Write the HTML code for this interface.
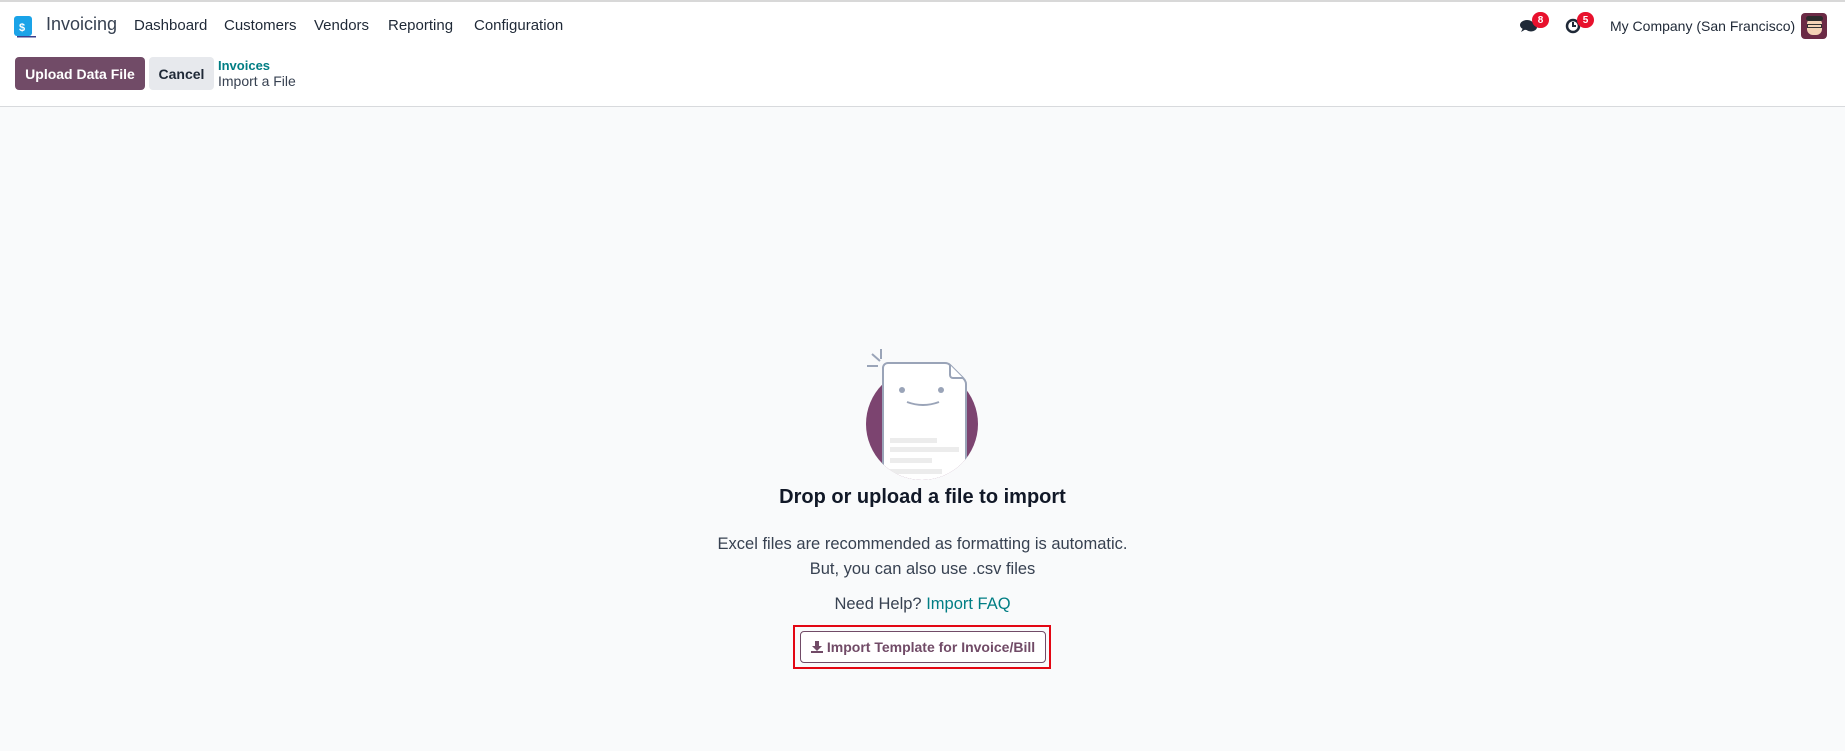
<!DOCTYPE html>
<html><head><style>
*{margin:0;padding:0;box-sizing:border-box}
body{width:1845px;height:751px;background:#f9fafb;font-family:"Liberation Sans",sans-serif;color:#374151;position:relative;overflow:hidden}
.hdr{position:absolute;left:0;top:0;width:1845px;height:107px;background:#fff;border-top:2px solid #d8d8d8;border-bottom:1px solid #d8dadd}
.a{position:absolute;white-space:nowrap}
.nav{font-size:15px;color:#1f2937;top:15px}
.btn{position:absolute;top:55px;height:33px;border-radius:4px;font-size:14px;font-weight:bold;display:flex;align-items:center;justify-content:center;white-space:nowrap}
.badge{position:absolute;width:17px;height:16px;border-radius:8px;background:#e8112d;color:#fff;font-size:10px;font-weight:bold;display:flex;align-items:center;justify-content:center}
.c{position:absolute;left:0;width:1845px;text-align:center}
</style></head><body>
<div class="hdr">
 <svg class="a" style="left:14px;top:13px" width="22" height="23" viewBox="0 0 22 23"><rect x="0" y="1" width="18" height="20" rx="3" fill="#1aa3e8"/><path d="M3 21h19v1.5H3z" fill="#3b3f8c"/><text x="5" y="16" font-size="11" font-weight="bold" fill="#fff" font-family="Liberation Sans">$</text></svg>
 <div class="a nav" style="left:46px;top:12px;font-size:18px;color:#374151">Invoicing</div>
 <div class="a nav" style="left:134px">Dashboard</div>
 <div class="a nav" style="left:224px">Customers</div>
 <div class="a nav" style="left:314px">Vendors</div>
 <div class="a nav" style="left:388px">Reporting</div>
 <div class="a nav" style="left:474px">Configuration</div>
 <svg class="a" style="left:1520px;top:16px" width="18" height="16" viewBox="0 0 18 16"><ellipse cx="7" cy="7" rx="7" ry="5" fill="#1f2937"/><ellipse cx="11" cy="9" rx="6" ry="4.5" fill="#1f2937"/><path d="M3 10l-2 4 5-3z" fill="#1f2937"/></svg>
 <div class="badge" style="left:1532px;top:10px">8</div>
 <svg class="a" style="left:1565px;top:16px" width="16" height="16" viewBox="0 0 16 16"><circle cx="8" cy="8" r="6" fill="none" stroke="#1f2937" stroke-width="2.5"/><path d="M8 4v4h3" stroke="#1f2937" stroke-width="2" fill="none"/></svg>
 <div class="badge" style="left:1577px;top:10px">5</div>
 <div class="a nav" style="left:1610px;top:16px;font-size:14px">My Company (San Francisco)</div>
 <div class="a" style="left:1801px;top:11px;width:26px;height:26px;border-radius:4px;background:#6b2a45;overflow:hidden"><div style="position:absolute;left:6px;top:5px;width:15px;height:17px;border-radius:6px;background:#f3d2b5"></div><div style="position:absolute;left:5px;top:3px;width:17px;height:5px;background:#2b2b2b;border-radius:3px"></div><div style="position:absolute;left:6px;top:11px;width:15px;height:4px;border:1px solid #333"></div></div>
 <div class="btn" style="left:15px;width:130px;background:#714b67;color:#fff">Upload Data File</div>
 <div class="btn" style="left:149px;width:65px;background:#e7e9ed;color:#1f2937">Cancel</div>
 <div class="a" style="left:218px;top:56px;font-size:13px;font-weight:bold;color:#017e84">Invoices</div>
 <div class="a" style="left:218px;top:71px;font-size:14px;color:#374151">Import a File</div>
</div>
<svg class="a" style="left:860px;top:342px" width="130" height="145" viewBox="0 0 130 145">
 <defs><clipPath id="cl"><circle cx="62" cy="82" r="56"/><rect x="0" y="0" width="130" height="82"/></clipPath></defs>
 <circle cx="62" cy="82" r="56" fill="#7c4470"/>
 <g clip-path="url(#cl)"><path d="M23 26a5 5 0 0 1 5-5H85Q88 21 90 23L103 36Q106 39 106 42V160H23z" fill="#fff" stroke="#9aa4b8" stroke-width="2"/>
 <g fill="#ececec"><rect x="30" y="96" width="47" height="5"/><rect x="30" y="105" width="69" height="5"/><rect x="30" y="116" width="42" height="5"/><rect x="30" y="127" width="52" height="5"/></g></g>
 <path d="M90 23v10a3 3 0 0 0 3 3h10" fill="#fff" stroke="#9aa4b8" stroke-width="2" stroke-linejoin="round"/>
 <path d="M12 12l8 7M7 24h11M21 7v10" stroke="#9aa4b8" stroke-width="2"/>
 <circle cx="42" cy="48" r="3" fill="#9aa4b8"/><circle cx="81" cy="48" r="3" fill="#9aa4b8"/>
 <path d="M47 60q16 6 32 0" fill="none" stroke="#9aa4b8" stroke-width="2"/>
</svg>
<div class="c" style="top:486px;font-size:20px;font-weight:bold;color:#111827">Drop or upload a file to import</div>
<div class="c" style="top:532px;font-size:16.5px;line-height:25px">Excel files are recommended as formatting is automatic.<br>But, you can also use .csv files</div>
<div class="c" style="top:595px;font-size:16.5px">Need Help? <span style="color:#017e84">Import FAQ</span></div>
<div class="a" style="left:793px;top:625px;width:258px;height:44px;border:2px solid #e30613"></div>
<div class="a" style="left:800px;top:631px;width:246px;height:32px;border:1px solid #714b67;border-radius:4px;background:#fff;color:#714b67;font-size:14px;font-weight:bold;display:flex;align-items:center;justify-content:center"><svg width="12" height="12" viewBox="0 0 12 12" style="margin-right:4px"><path d="M4 0h4v5h3L6 10 1 5h3z" fill="#714b67"/><rect x="0" y="10" width="12" height="2" fill="#714b67"/></svg>Import Template for Invoice/Bill</div>
</body></html>
